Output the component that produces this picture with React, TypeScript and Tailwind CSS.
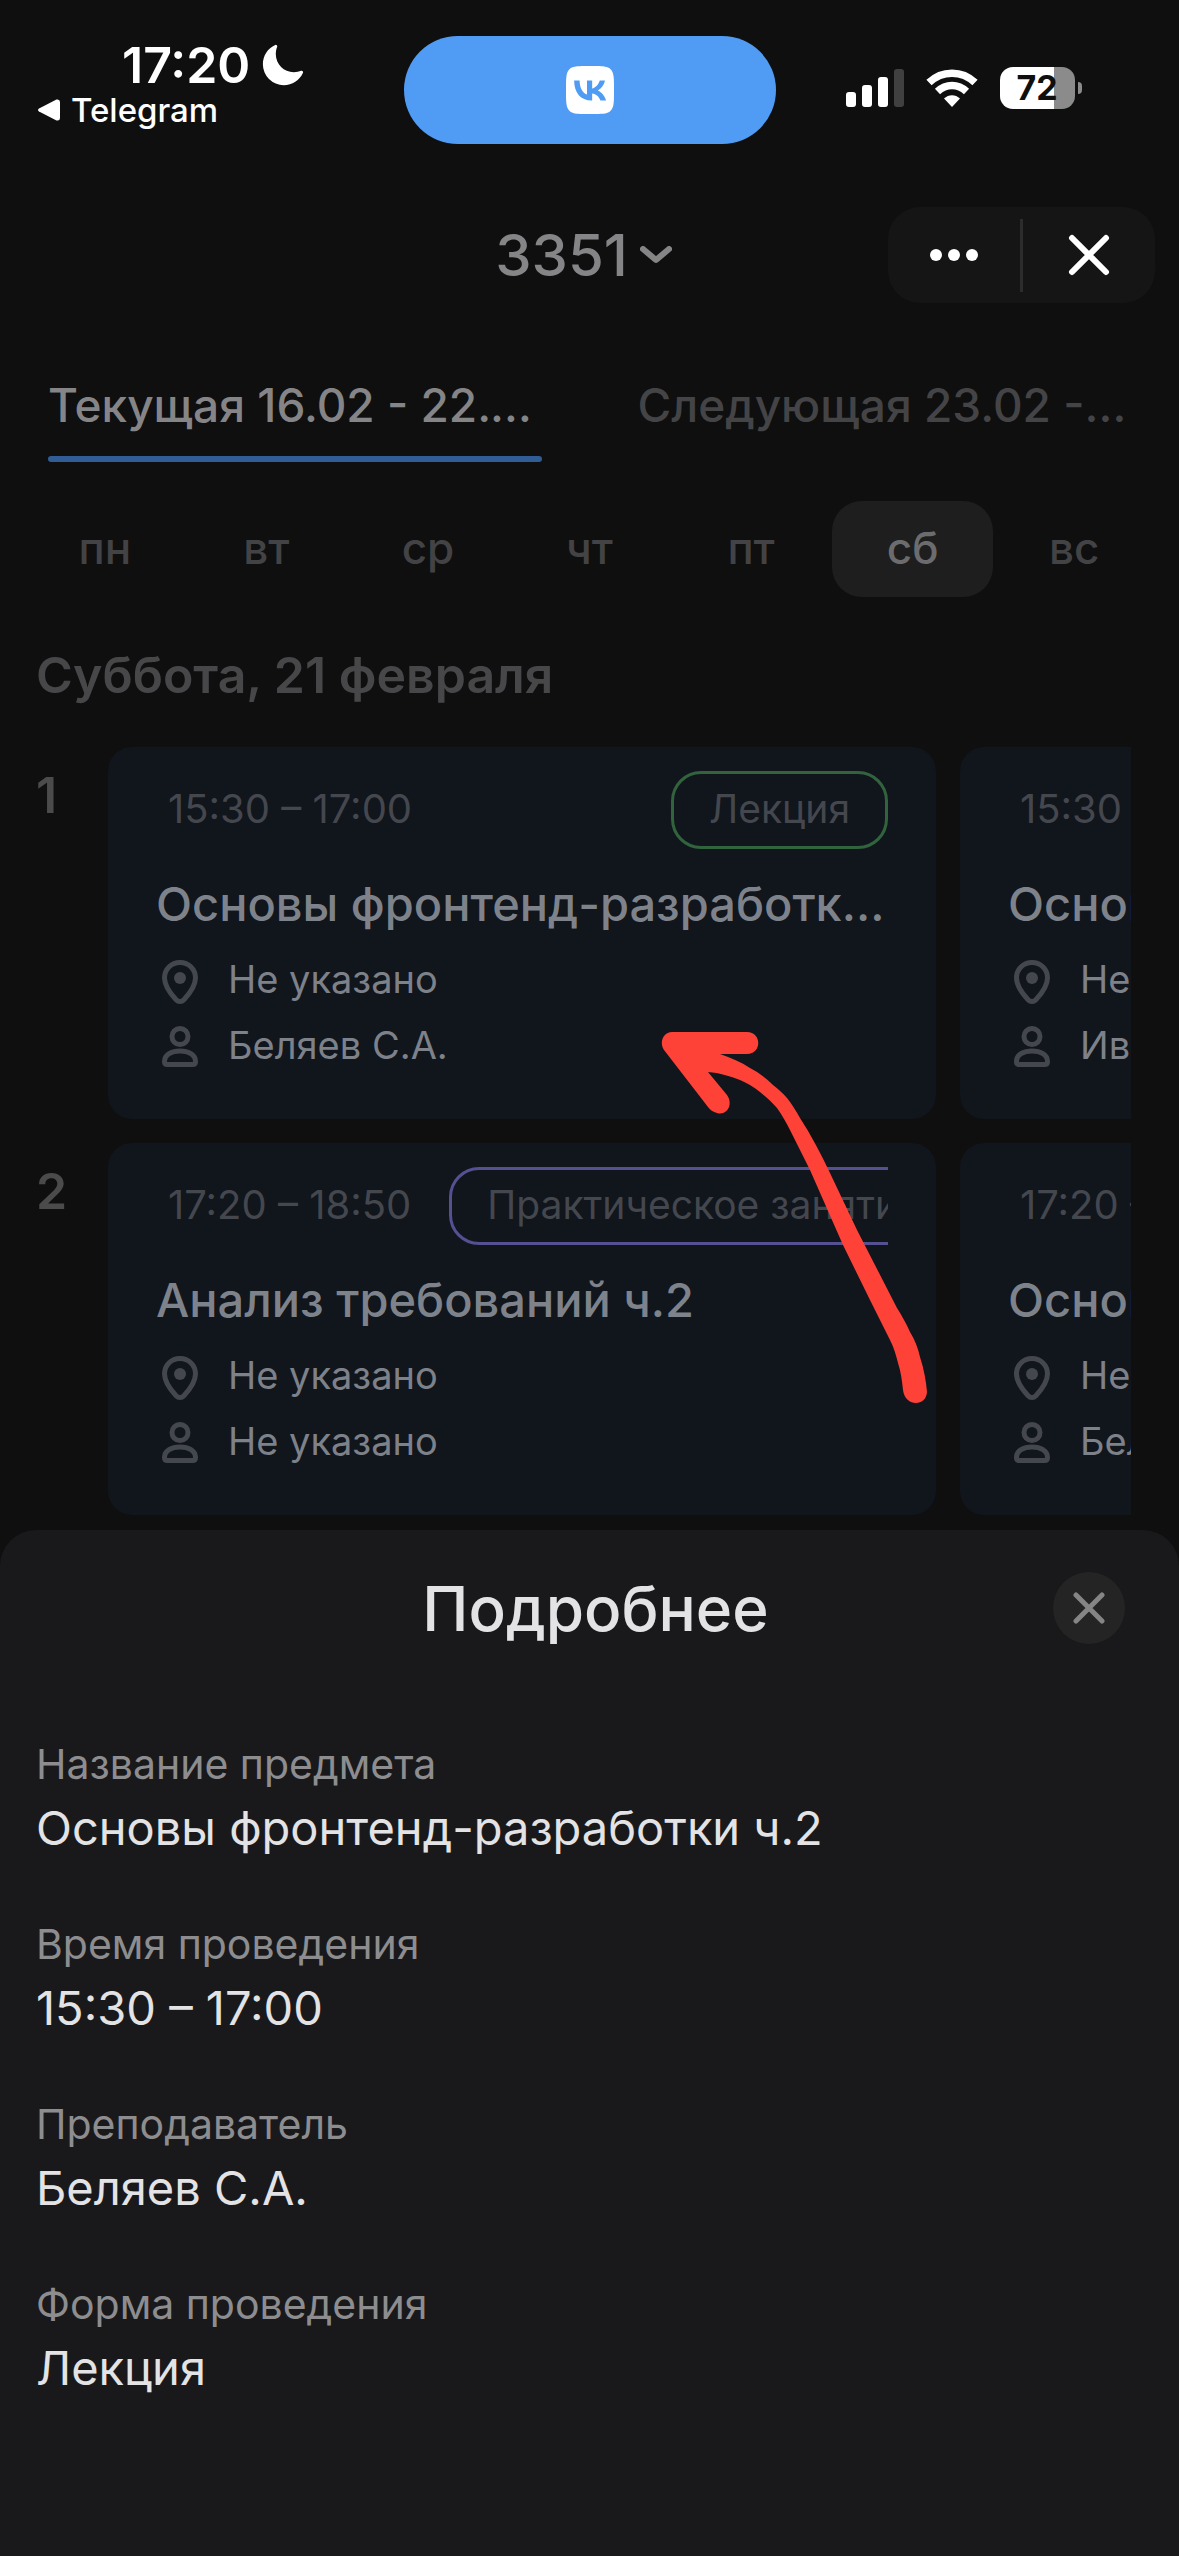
import { useState } from 'react'
import { IoMoon } from 'react-icons/io5'
import { SiVk } from 'react-icons/si'
import { clsx } from 'clsx'

interface Lesson {
  time: string
  kind: string
  tone: 'lecture' | 'practice'
  title: string
  place: string
  teacher: string
}

const WEEKS = ['Текущая 16.02 - 22.02', 'Следующая 23.02 - 01.03']
const DAYS = ['пн', 'вт', 'ср', 'чт', 'пт', 'сб', 'вс']

const SLOTS: { number: number; lessons: Lesson[] }[] = [
  {
    number: 1,
    lessons: [
      {
        time: '15:30 – 17:00',
        kind: 'Лекция',
        tone: 'lecture',
        title: 'Основы фронтенд-разработки ч.2',
        place: 'Не указано',
        teacher: 'Беляев С.А.',
      },
      {
        time: '15:30 – 17:00',
        kind: 'Лекция',
        tone: 'lecture',
        title: 'Основы фронтенд-разработки ч.2',
        place: 'Не указано',
        teacher: 'Иванов А.А.',
      },
    ],
  },
  {
    number: 2,
    lessons: [
      {
        time: '17:20 – 18:50',
        kind: 'Практическое занятие',
        tone: 'practice',
        title: 'Анализ требований ч.2',
        place: 'Не указано',
        teacher: 'Не указано',
      },
      {
        time: '17:20 – 18:50',
        kind: 'Практическое занятие',
        tone: 'practice',
        title: 'Основы фронтенд-разработки ч.2',
        place: 'Не указано',
        teacher: 'Беляев С.А.',
      },
    ],
  },
]

const DETAILS = [
  { label: 'Название предмета', value: 'Основы фронтенд-разработки ч.2' },
  { label: 'Время проведения', value: '15:30 – 17:00' },
  { label: 'Преподаватель', value: 'Беляев С.А.' },
  { label: 'Форма проведения', value: 'Лекция' },
]

function CellularIcon() {
  return (
    <svg width="58" height="38" viewBox="0 0 58 38" fill="#fff" aria-hidden="true">
      <rect x="0" y="23" width="10" height="15" rx="3" />
      <rect x="16" y="16" width="10" height="22" rx="3" />
      <rect x="32" y="8" width="10" height="30" rx="3" />
      <rect x="48" y="0" width="10" height="38" rx="3" fill="#404040" />
    </svg>
  )
}

function WifiIcon() {
  return (
    <svg width="52" height="38" viewBox="0 0 52 38" fill="none" stroke="#fff" aria-hidden="true">
      <path d="M3 13.5C16 1 36 1 49 13.5" strokeWidth="7.5" />
      <path d="M11.5 22.5C20 14.5 32 14.5 40.5 22.5" strokeWidth="7.5" />
      <path d="M18 29.5C22.5 25 29.5 25 34 29.5L26 38Z" fill="#fff" stroke="none" />
    </svg>
  )
}

function PinIcon() {
  return (
    <svg className="shrink-0" width="48" height="48" viewBox="0 0 48 48" fill="none" aria-hidden="true">
      <path
        d="M24 5.5c-8.8 0-15.5 6.7-15.5 15.3 0 8.2 6.5 16.5 11.6 21.9 2.3 2.4 5.5 2.4 7.8 0 5.1-5.4 11.6-13.7 11.6-21.9C39.5 12.2 32.8 5.5 24 5.5Z"
        stroke="#44474e"
        strokeWidth="5"
      />
      <circle cx="24" cy="21" r="6" fill="#44474e" />
    </svg>
  )
}

function PersonIcon() {
  return (
    <svg
      className="shrink-0"
      width="48"
      height="48"
      viewBox="0 0 48 48"
      fill="none"
      stroke="#44474e"
      strokeWidth="5"
      aria-hidden="true"
    >
      <circle cx="24" cy="13.5" r="8" />
      <path d="M8.5 38.5c0-7 7-10.5 15.5-10.5s15.5 3.5 15.5 10.5c0 2-1 3-3 3h-25c-2 0-3-1-3-3Z" />
    </svg>
  )
}

function StatusBar() {
  return (
    <div className="grid h-[207px] grid-cols-[1fr_372px_1fr] text-white">
      <div className="pt-[39px]">
        <div className="flex items-center gap-[10px] pl-[122px]">
          <span className="text-[50px] leading-[52px] font-semibold">17:20</span>
          <IoMoon size={46} aria-hidden="true" />
        </div>
        <a href="#telegram" className="flex items-center gap-[10px] pl-[37px] text-[33px] leading-[38px] font-medium">
          <svg width="24" height="22" viewBox="0 0 24 22" fill="#fff" aria-hidden="true">
            <path d="M2 9.5 19.5.6Q23 0 23 3v16q0 3-3.5 2.4L2 12.5q-2-1.500 0-3Z" />
          </svg>
          Telegram
        </a>
      </div>
      <div className="mt-9 flex h-[108px] items-center justify-center rounded-full bg-[#509cf5]">
        <SiVk size={48} title="VK" />
      </div>
      <div className="mt-[67px] flex h-[42px] items-center gap-[22px] pl-[70px]">
        <CellularIcon />
        <WifiIcon />
        <div className="flex items-center gap-[3px]">
          <div className="flex h-[42px] w-[75px] items-center justify-center rounded-[13px] bg-linear-to-r from-white from-72% to-[#8b8b8b] to-72% text-[34px] leading-[42px] font-bold text-[#0f0f10]">
            72
          </div>
          <div className="h-3 w-1 rounded-r-full bg-[#8b8b8b]" />
        </div>
      </div>
    </div>
  )
}

function Header() {
  return (
    <header className="grid grid-cols-[1fr_auto_1fr] items-center px-6">
      <button className="col-start-2 flex items-center gap-3 pr-3 text-[58px] leading-[72px] font-medium text-[#858587]">
        3351
        <svg width="32" height="18" viewBox="0 0 32 18" fill="none" aria-hidden="true">
          <path d="m3 3 13 11L29 3" stroke="currentColor" strokeWidth="6" strokeLinecap="round" strokeLinejoin="round" />
        </svg>
      </button>
      <div className="flex h-24 w-[267px] items-center justify-self-end rounded-[32px] bg-[#151515]">
        <button aria-label="Меню" className="flex flex-1 items-center justify-center gap-[6px]">
          <span className="size-3 rounded-full bg-white" />
          <span className="size-3 rounded-full bg-white" />
          <span className="size-3 rounded-full bg-white" />
        </button>
        <span className="h-[73px] w-[3px] bg-[#2c2c2c]" />
        <button aria-label="Закрыть приложение" className="flex flex-1 items-center justify-center">
          <svg width="42" height="42" viewBox="0 0 42 42" aria-hidden="true">
            <path d="m4 4 34 34M38 4 4 38" stroke="#fff" strokeWidth="6" strokeLinecap="round" />
          </svg>
        </button>
      </div>
    </header>
  )
}

function LessonCard({ lesson }: { lesson: Lesson }) {
  return (
    <article className="w-[828px] shrink-0 rounded-3xl bg-[#11151c] px-12 pt-6 pb-12">
      <div className="flex items-center justify-between overflow-hidden leading-[46px] whitespace-nowrap text-[#44474e]">
        <span className="pr-[38px] pb-[2px] pl-3 text-[40px]">{lesson.time}</span>
        <span
          className={clsx(
            'rounded-[30px] border-3 px-[35px] pt-3 pb-[14px] text-[39px]',
            lesson.tone === 'lecture' ? 'border-[#31643d]' : 'border-[#555092]',
          )}
        >
          {lesson.kind}
        </span>
      </div>
      <h3 className="mt-[25px] truncate text-[47px] leading-[60px] font-medium text-[#7e838b]">{lesson.title}</h3>
      <div className="mt-[23px] flex flex-col gap-[18px] text-[38px] leading-[44px] text-[#7d8189]">
        <p className="flex items-center gap-6">
          <PinIcon />
          <span className="pb-1">{lesson.place}</span>
        </p>
        <p className="flex items-center gap-6">
          <PersonIcon />
          <span className="pb-1">{lesson.teacher}</span>
        </p>
      </div>
    </article>
  )
}

function DetailsSheet() {
  return (
    <section className="mt-[15px] flex-1 rounded-t-[36px] bg-[#19191b] pb-16 text-[#e3e3e5]">
      <div className="flex items-center pt-[42px] pr-[54px] pl-[138px]">
        <h2 className="flex-1 pt-[2px] text-center text-[62px] leading-[70px] font-medium">Подробнее</h2>
        <button aria-label="Закрыть" className="flex size-[72px] items-center justify-center rounded-full bg-[#242425]">
          <svg width="32" height="32" viewBox="0 0 32 32" aria-hidden="true">
            <path d="m3 3 26 26M29 3 3 29" stroke="#858586" strokeWidth="5" strokeLinecap="round" />
          </svg>
        </button>
      </div>
      <dl className="mt-24 flex flex-col gap-[62px] px-9">
        {DETAILS.map(({ label, value }) => (
          <div key={label} className="flex flex-col gap-[10px]">
            <dt className="text-[41px] leading-[48px] text-[#8d8d90]">{label}</dt>
            <dd className="text-[47px] leading-[60px]">{value}</dd>
          </div>
        ))}
      </dl>
    </section>
  )
}

// Hand-drawn marker pointing at the selected lesson
function MarkerArrow() {
  return (
    <svg
      className="pointer-events-none absolute top-[1030px] left-[660px]"
      width="270"
      height="376"
      viewBox="0 0 270 376"
      fill="#ff4238"
      aria-hidden="true"
    >
      <path d="M12 2H87C102 2 102 24 87 24H60C71 28 81 32 90 38C98 42 106 48 113 55C118 59 123 63 127 68C132 74 136 81 140 88C151 105 161 124 170 143L197 200L237 278C242 286 246 293 250 302C255 310 258 318 260 327C264 339 266 351 267 362C266 377 245 377 243 360C242 351 241 342 238 333C236 325 234 318 230 310L210 270L183 215L150 140L130 100C126 92 122 85 117 78C112 72 106 67 100 62C94 57 87 53 80 50C70 46 60 43 48 42L67 65C74 75 66 86 57 83C53 82 50 80 48 77L4 20C-1 13 3 2 12 2Z" />
    </svg>
  )
}

export default function App() {
  const [week, setWeek] = useState(0)
  const [day, setDay] = useState(5)

  return (
    <div className="relative flex min-h-screen flex-col overflow-hidden bg-[#0f0f10] font-['Inter','Noto_Sans',sans-serif]">
      <StatusBar />
      <Header />

      <nav className="mt-[72px] grid grid-cols-2 gap-24 px-12 text-[46px] leading-[60px] font-medium">
        {WEEKS.map((label, i) => (
          <button
            key={label}
            onClick={() => setWeek(i)}
            className={clsx('flex min-w-0 flex-col gap-[21px] text-left', week === i ? 'text-[#858587]' : 'text-[#444446]')}
          >
            <span className="w-full truncate">{label}</span>
            <span className={clsx('h-[6px] w-full rounded-full', week === i && 'bg-[#315d97]')} />
          </button>
        ))}
      </nav>

      <div className="mt-[39px] grid grid-cols-7 px-6 text-[44px] leading-[94px] font-medium">
        {DAYS.map((name, i) => (
          <button
            key={name}
            onClick={() => setDay(i)}
            className={clsx('rounded-[30px] pb-[2px]', day === i ? 'bg-[#1e1e1e] text-[#6c6c6e]' : 'text-[#434345]')}
          >
            {name}
          </button>
        ))}
      </div>

      <main className="mt-12 px-9">
        <h1 className="text-[50px] leading-[60px] font-semibold text-[#474749]">Суббота, 21 февраля</h1>
        <div className="mt-[42px] mr-3 flex flex-col gap-6">
          {SLOTS.map(({ number, lessons }) => (
            <div key={number} className="flex">
              <div className="w-[72px] shrink-0 pt-[18px] text-[50px] leading-[60px] font-semibold text-[#4b4b4c]">
                {number}
              </div>
              <div className="flex min-w-0 flex-1 gap-6 overflow-hidden">
                {lessons.map((lesson, i) => (
                  <LessonCard key={i} lesson={lesson} />
                ))}
              </div>
            </div>
          ))}
        </div>
      </main>

      <DetailsSheet />
      <MarkerArrow />
    </div>
  )
}
